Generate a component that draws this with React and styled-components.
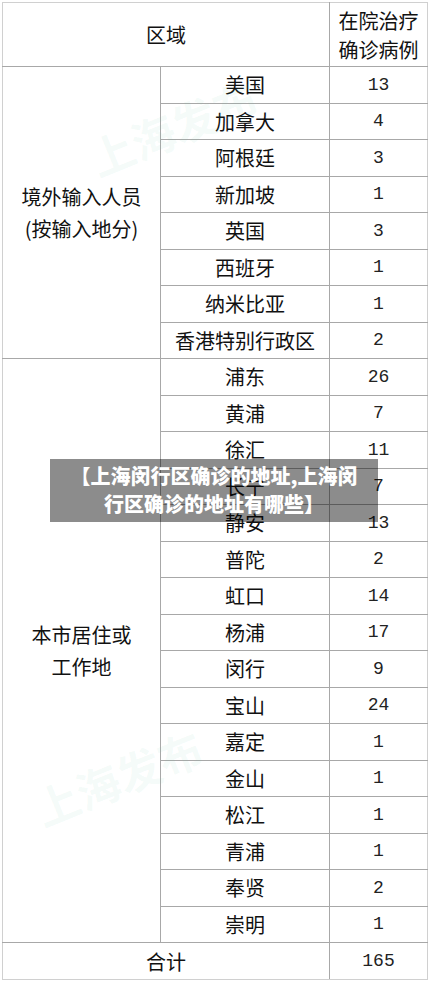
import styled, { createGlobalStyle } from "styled-components"

const GlobalStyle = createGlobalStyle`
    body{
        margin: 0;
        background: #ffffff;
        font-family: "Noto Sans CJK SC", "Noto Sans", sans-serif;
    }
`

const abroad = [
    ["美国", 13], ["加拿大", 4], ["阿根廷", 3], ["新加坡", 1],
    ["英国", 3], ["西班牙", 1], ["纳米比亚", 1], ["香港特别行政区", 2],
]

const local = [
    ["浦东", 26], ["黄浦", 7], ["徐汇", 11], ["长宁", 7], ["静安", 13],
    ["普陀", 2], ["虹口", 14], ["杨浦", 17], ["闵行", 9], ["宝山", 24],
    ["嘉定", 1], ["金山", 1], ["松江", 1], ["青浦", 1], ["奉贤", 2], ["崇明", 1],
]

export default function App(){
    return(
        <Pagina>
            <GlobalStyle />
            <Tabela>
                <colgroup>
                    <col style={{ width: 158 }} />
                    <col style={{ width: 169 }} />
                    <col style={{ width: 98 }} />
                </colgroup>
                <tbody>
                    <Cabecalho>
                        <Celula colSpan={2}>区域</Celula>
                        <Celula>在院治疗<br />确诊病例</Celula>
                    </Cabecalho>
                    {abroad.map(([nome, n], i) => (
                        <Linha key={nome}>
                            {i === 0 && <Grupo rowSpan={abroad.length}>境外输入人员<br />(按输入地分)</Grupo>}
                            <Celula>{nome}</Celula>
                            <Numero>{n}</Numero>
                        </Linha>
                    ))}
                    {local.map(([nome, n], i) => (
                        <Linha key={nome}>
                            {i === 0 && <Grupo rowSpan={local.length}>本市居住或<br />工作地</Grupo>}
                            <Celula>{nome}</Celula>
                            <Numero>{n}</Numero>
                        </Linha>
                    ))}
                    <Total>
                        <Celula colSpan={2}>合计</Celula>
                        <Numero>165</Numero>
                    </Total>
                </tbody>
            </Tabela>

            <MarcaDagua $top={95} $left={85}>上海发布</MarcaDagua>
            <MarcaDagua $top={745} $left={30}>上海发布</MarcaDagua>

            <Faixa>【上海闵行区确诊的地址,上海闵行区确诊的地址有哪些】</Faixa>
        </Pagina>
    )
}

const Pagina = styled.div`
    position: relative;
    width: 429px;
    height: 981px;
    padding: 2px 2px 0 2px;
    box-sizing: border-box;
    overflow: hidden;
`
const Tabela = styled.table`
    width: 425px;
    border-collapse: collapse;
    table-layout: fixed;
    td{
        border: 1px solid #a8a8a8;
        padding: 0;
        text-align: center;
        color: #111111;
    }
`
const Celula = styled.td`
    font-size: 20px;
    line-height: 29px;
`
const Grupo = styled.td`
    font-size: 20px;
    line-height: 32px;
    && { border-left-color: #d0d0d0; }
`
const Numero = styled.td`
    font-family: "Liberation Mono", "DejaVu Sans Mono", monospace;
    font-size: 18px;
    && { color: #222222; border-right-color: #d0d0d0; }
`
const Cabecalho = styled.tr`
    height: 64px;
    td{ border-top-color: #d0d0d0; }
    td:first-child{ border-left-color: #d0d0d0; }
    td:last-child{ border-right-color: #d0d0d0; }
`
const Linha = styled.tr`
    height: 36.5px;
`
const Total = styled.tr`
    height: 37px;
    td{ border-bottom-color: #d0d0d0; }
    td:first-child{ border-left-color: #d0d0d0; }
`
const MarcaDagua = styled.div`
    position: absolute;
    top: ${p => p.$top}px;
    left: ${p => p.$left}px;
    font-size: 44px;
    font-weight: 700;
    color: rgba(110, 200, 170, 0.07);
    transform: rotate(-22deg);
    pointer-events: none;
    white-space: nowrap;
`
const Faixa = styled.div`
    position: absolute;
    top: 459px;
    left: 50px;
    width: 328px;
    height: 63px;
    box-sizing: border-box;
    padding: 3px 14px 0;
    background: rgba(0, 0, 0, 0.45);
    color: #ffffff;
    font-size: 20px;
    font-weight: 900;
    line-height: 28px;
    text-align: center;
`
